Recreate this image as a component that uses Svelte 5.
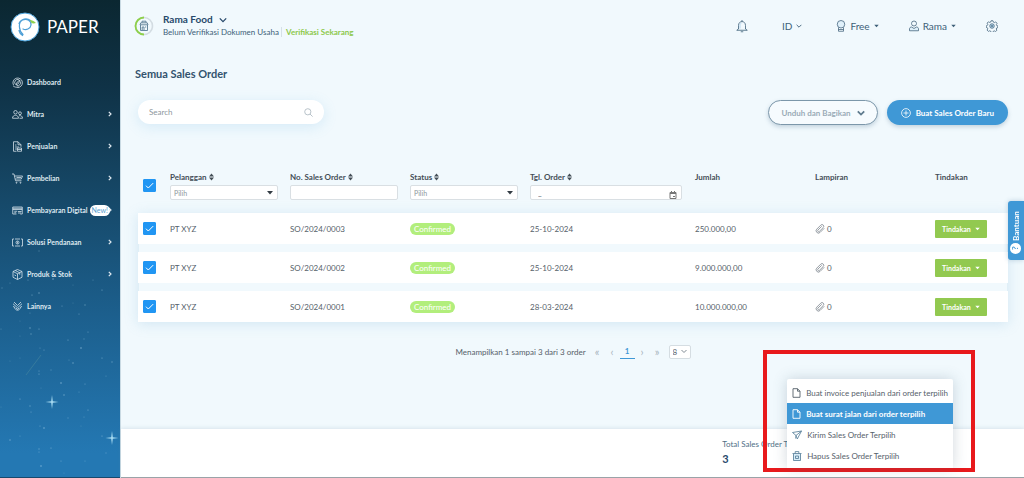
<script>
    const menu = [
        { label: "Dashboard", icon: "dashboard" },
        { label: "Mitra", icon: "partners", sub: true },
        { label: "Penjualan", icon: "invoice", sub: true },
        { label: "Pembelian", icon: "cart", sub: true },
        { label: "Pembayaran Digital", icon: "card", sub: true, badge: "New!" },
        { label: "Solusi Pendanaan", icon: "money", sub: true },
        { label: "Produk & Stok", icon: "box", sub: true },
        { label: "Lainnya", icon: "more" },
    ];

    const stars = [
        [39, 14], [10, 46], [28, 43], [53, 42], [73, 48], [93, 43], [39, 56], [32, 58], [73, 66], [85, 68],
        [62, 69], [102, 53], [2, 51], [30, 76], [79, 77], [41, 72], [20, 84], [1, 92], [30, 91], [39, 92],
        [20, 99], [31, 97], [88, 95], [68, 103], [84, 102], [40, 111], [44, 113], [81, 111], [20, 121], [69, 123],
        [73, 126], [102, 121], [10, 124], [112, 125], [39, 134], [39, 137], [51, 133], [106, 139], [85, 147], [61, 146],
        [41, 151], [79, 155], [64, 158], [20, 162], [1, 170], [30, 169], [31, 175], [88, 173], [68, 181], [84, 180],
        [40, 189], [44, 191], [81, 189], [20, 199], [10, 203], [102, 199], [112, 203], [39, 212], [39, 215], [51, 211],
        [106, 216], [85, 224], [61, 224], [41, 229], [64, 236],
    ];

    let orders = $state([
        { id: "SO/2024/0003", customer: "PT XYZ", status: "Confirmed", date: "25-10-2024", total: "250.000,00", files: 0, checked: true },
        { id: "SO/2024/0002", customer: "PT XYZ", status: "Confirmed", date: "25-10-2024", total: "9.000.000,00", files: 0, checked: true },
        { id: "SO/2024/0001", customer: "PT XYZ", status: "Confirmed", date: "28-03-2024", total: "10.000.000,00", files: 0, checked: true },
    ]);

    const actions = [
        { label: "Buat invoice penjualan dari order terpilih", icon: "file" },
        { label: "Buat surat jalan dari order terpilih", icon: "file", active: true },
        { label: "Kirim Sales Order Terpilih", icon: "send" },
        { label: "Hapus Sales Order Terpilih", icon: "trash" },
    ];

    let selected = $derived(orders.filter((o) => o.checked).length);

    const toggleAll = (e) => {
        orders.forEach((o) => (o.checked = e.currentTarget.checked));
    };
</script>

{#snippet sortIcon()}
    <svg class="sort" width="5" height="8" viewBox="0 0 5 8" aria-hidden="true">
        <path d="M2.5 0.4L5 3.4H0z M2.5 7.6L5 4.6H0z" fill="currentColor" />
    </svg>
{/snippet}

{#snippet caret()}
    <svg width="5" height="4" viewBox="0 0 5 4" aria-hidden="true"><path d="M0.3 0.8h4.4L2.5 3.2z" fill="currentColor" /></svg>
{/snippet}

{#snippet chevron(size, width)}
    <svg width={size} height={size} viewBox="0 0 8 8" fill="none" stroke="currentColor" stroke-width={width} aria-hidden="true">
        <path d="M0.8 2.4L4 5.6l3.2-3.2" />
    </svg>
{/snippet}

{#snippet clip()}
    <svg width="10" height="10" viewBox="0 0 20 20" fill="none" stroke="#7d878f" stroke-width="1.6" stroke-linecap="round" aria-hidden="true">
        <path d="M18 9l-7.8 7.8a4.6 4.6 0 0 1-6.6-6.6l8-8a3.4 3.4 0 0 1 4.9 4.8l-7.8 7.8a1.9 1.9 0 0 1-2.8-2.7l7-7" />
    </svg>
{/snippet}

<div class="app">
    <aside class="sidebar">
        <svg class="sky" viewBox="0 0 120 240" aria-hidden="true">
            {#each stars as [x, y], i}
                <circle cx={x} cy={y} r={i % 3 ? 0.6 : 0.8} fill="#a9d3ea" opacity={0.25 + (i % 4) * 0.12} />
            {/each}
            <path d="M26 138L41 118" stroke="#7fb5a8" stroke-width="0.6" opacity="0.4" />
            <path d="M52 158l0.8 6.2 5.7 0.8-5.7 0.8L52 172l-0.8-6.2-5.7-0.8 5.7-0.8z" fill="#a9dcf2" />
            <path d="M112 194l0.8 6.2 5.7 0.8-5.7 0.8-0.8 6.2-0.8-6.2-5.7-0.8 5.7-0.8z" fill="#a9dcf2" />
        </svg>

        <a class="brand" href="#home">
            <svg width="30" height="30" viewBox="0 0 30 30" fill="none" aria-hidden="true">
                <circle cx="15" cy="15" r="14" fill="#fff" stroke="#4aa3dc" />
                <path d="M13 22.5C8.500 18 8 10.500 12.500 8c4.500-2 9 1 8.500 5s-5 5.500-8 4M12.500 23.500c-2-1-3-3-3.500-5M9 11.500C11 6.500 17 5.500 20.500 8.500" stroke="#4d9fd6" stroke-width="1.200" stroke-linecap="round" />
                <path d="M20 8c2 0.500 3.500 0.500 6 3-2 0.800-4 0.500-5-0.500z" fill="#8fd14f" />
            </svg>
            <span>PAPER</span>
        </a>

        <nav>
            {#each menu as item}
                <a class="nav-item" href="#menu">
                    <svg width="11" height="11" viewBox="0 0 22 22" fill="none" stroke="currentColor" stroke-width="1.500" aria-hidden="true">
                        {#if item.icon === "dashboard"}
                            <path d="M3 16a9.500 9.500 0 1 1 8 5M2 17.500c3 3 7 3.500 11 2.500" />
                            <path d="M7 15a6 6 0 0 1 7-9.500M17 9a6 6 0 0 1-7.500 8M16 6l-3 7-5 3 2.500-6z" />
                        {:else if item.icon === "partners"}
                            <circle cx="7" cy="6.500" r="3.500" />
                            <circle cx="16" cy="8.500" r="2.800" />
                            <path d="M1 18.500c0-8 12-8 12 0zM14 13.500c4-1 7 1 7 5h-6" />
                        {:else if item.icon === "invoice"}
                            <path d="M9 20.500H3V1.500h9l6 6v4M12 1.500v6h6M6 8h3M6 12h8M6 16h4M11 14h8v6.500h-8zM11 17h8" />
                        {:else if item.icon === "cart"}
                            <path d="M0 2h4l3 13.500h12M5 6h16l-2.500 6H6.500M9 9h9" />
                            <circle cx="9" cy="19.500" r="1" />
                            <circle cx="17" cy="19.500" r="1" />
                        {:else if item.icon === "card"}
                            <path d="M9 18H1.500V4h19v14h-4M1.500 6.500h19M1.500 9h19M4.500 12.500h6M4.500 15.500h4M12 13h7M12 16h6" />
                        {:else if item.icon === "money"}
                            <path d="M4 4H1v14h3M18 4h3v14h-3M6 4h10M6 18h10" />
                            <circle cx="11" cy="11" r="3" />
                            <path d="M11 9v4" />
                        {:else if item.icon === "box"}
                            <path d="M11 1l9 4v11.500L11 21l-9-4.500V5zM2 5l9 4.500L20 5M11 9.500V21M6.500 3l9 4.500v4M5 12l3 1.500" />
                        {:else}
                            <path d="M4 2l7 7 7-7M2 5.500l9 8 9-8M2 11l3 1c1 8.500 11 8.500 12 0l3-1M8 14l3 3 3-3" />
                        {/if}
                    </svg>
                    <span>{item.label}</span>
                    {#if item.badge}<span class="new">{item.badge}</span>{/if}
                    {#if item.sub}
                        <svg class="arrow" width="4" height="6" viewBox="0 0 4 6" fill="none" stroke="currentColor" stroke-width="1.200" aria-hidden="true">
                            <path d="M0.800 0.800L3 3 0.800 5.200" />
                        </svg>
                    {/if}
                </a>
            {/each}
        </nav>
    </aside>

    <main>
        <header>
            <svg class="avatar" width="20" height="20" viewBox="0 0 20 20" fill="none" aria-hidden="true">
                <circle cx="10" cy="10" r="8.500" stroke="#d3dce2" stroke-width="1.600" />
                <path d="M10 18.500A8.500 8.500 0 0 1 10 1.500" stroke="#8ed04b" stroke-width="1.800" />
                <path d="M6.500 9v5.500h7V9M6 8.800l0.800-2h6.400l0.800 2zM8 6.500V5.200h4v1.300M8.200 14v-3h1.800v3M11 11h1.200" stroke="#587b93" stroke-width="0.900" />
            </svg>
            <div class="company">
                <button class="company-name">Rama Food {@render chevron(8, 1.3)}</button>
                <p>Belum Verifikasi Dokumen Usaha <a href="#verify">Verifikasi Sekarang</a></p>
            </div>
            <div class="tools">
                <button aria-label="Notifikasi">
                    <svg width="12" height="14" viewBox="0 0 24 28" fill="none" stroke="currentColor" stroke-width="1.600" aria-hidden="true">
                        <path d="M12 2v3M5 20v-7c0-10.500 14-10.500 14 0v7l3.500 2.500h-21L5 20M9.500 25.500h5" />
                        <path d="M8 19v-7c0-2 1-3.500 3-4" stroke="#a9d1ec" />
                    </svg>
                </button>
                <button class="lang">ID {@render chevron(6, 1.2)}</button>
                <button>
                    <svg width="10" height="12" viewBox="0 0 20 24" fill="none" stroke="currentColor" stroke-width="1.500" aria-hidden="true">
                        <circle cx="10" cy="8.500" r="7.500" fill="#dff0fa" />
                        <path d="M5 15v7.500h10V15M5 19h10" />
                    </svg>
                    <span>Free</span> {@render caret()}
                </button>
                <button>
                    <svg width="10" height="12" viewBox="0 0 20 24" fill="none" stroke="currentColor" stroke-width="1.500" aria-hidden="true">
                        <circle cx="10" cy="7" r="5" />
                        <path d="M1 21.500v-4c0-2 2-3.500 4-3.500l5 3 5-3c2 0 4 1.500 4 3.500v4z" fill="#dff0fa" />
                    </svg>
                    <span>Rama</span> {@render caret()}
                </button>
                <button aria-label="Pengaturan">
                    <svg width="12" height="12" viewBox="0 0 24 24" fill="none" stroke="currentColor" stroke-width="1.500" aria-hidden="true">
                        <path d="M10 1.500h4l0.800 2.800 2 0.900 2.600-1.400 2.700 2.800-1.400 2.600 0.800 2 2.300 0.700v3.200l-2.500 0.900-0.800 2 1.300 2.500-2.600 2.500-2.600-1.300-2 0.900-0.800 2.300h-3.600l-0.900-2.600-2-0.800-2.500 1.300-2.700-2.600 1.400-2.600-0.800-2-2.200-0.800v-3.200l2.300-0.900 0.800-2-1.400-2.400 2.600-2.700 2.600 1.300 2-0.800z" />
                        <circle cx="12" cy="12" r="4.500" fill="#bfe0f4" />
                        <circle cx="12" cy="12" r="1.500" />
                    </svg>
                </button>
            </div>
        </header>

        <h1>Semua Sales Order</h1>

        <section class="content">
            <div class="toolbar">
                <label class="search">
                    <input type="text" placeholder="Search" aria-label="Search" />
                    <svg width="9" height="9" viewBox="0 0 9 9" fill="none" stroke="#b9c3ca" aria-hidden="true">
                        <circle cx="3.800" cy="3.800" r="3.100" />
                        <path d="M6 6l2.600 2.600" />
                    </svg>
                </label>
                <button class="pill outline">Unduh dan Bagikan {@render chevron(8, 1.8)}</button>
                <button class="pill solid">
                    <svg width="10" height="10" viewBox="0 0 10 10" fill="none" stroke="currentColor" stroke-width="0.800" aria-hidden="true">
                        <circle cx="5" cy="5" r="4.400" />
                        <path d="M5 2.500v5M2.500 5h5" />
                    </svg>
                    Buat Sales Order Baru
                </button>
            </div>

            <table>
                <colgroup>
                    <col class="col-check" />
                    <col class="col" />
                    <col class="col" />
                    <col class="col" />
                    <col class="col-date" />
                    <col class="col" />
                    <col class="col" />
                    <col class="col-action" />
                </colgroup>
                <thead>
                    <tr>
                        <th class="check"><input type="checkbox" aria-label="Pilih semua" checked={selected === orders.length} onchange={toggleAll} /></th>
                        <th>
                            <label for="f-customer">Pelanggan {@render sortIcon()}</label>
                            <select id="f-customer"><option>Pilih</option></select>
                        </th>
                        <th>
                            <label for="f-number">No. Sales Order {@render sortIcon()}</label>
                            <input id="f-number" class="field" type="text" />
                        </th>
                        <th>
                            <label for="f-status">Status {@render sortIcon()}</label>
                            <select id="f-status"><option>Pilih</option></select>
                        </th>
                        <th>
                            <label for="f-date">Tgl. Order {@render sortIcon()}</label>
                            <input id="f-date" class="field date" type="text" value="_" />
                        </th>
                        <th>Jumlah</th>
                        <th>Lampiran</th>
                        <th>Tindakan</th>
                    </tr>
                </thead>
                <tbody>
                    {#each orders as order}
                        <tr>
                            <td class="check"><input type="checkbox" aria-label={order.id} bind:checked={order.checked} /></td>
                            <td>{order.customer}</td>
                            <td>{order.id}</td>
                            <td><span class="status">{order.status}</span></td>
                            <td>{order.date}</td>
                            <td>{order.total}</td>
                            <td><span class="files">{@render clip()} {order.files}</span></td>
                            <td><button class="action">Tindakan {@render caret()}</button></td>
                        </tr>
                    {/each}
                </tbody>
            </table>

            <div class="pagination">
                <span>Menampilkan 1 sampai 3 dari 3 order</span>
                <div class="pages">
                    <button>«</button>
                    <button>‹</button>
                    <button class="current">1</button>
                    <button>›</button>
                    <button>»</button>
                </div>
                <select class="page-size" aria-label="Jumlah per halaman"><option>8</option></select>
            </div>
        </section>

        <footer>
            <div class="total">
                <span>Total Sales Order Terpilih</span>
                <strong>{selected}</strong>
            </div>
        </footer>

        <div class="highlight">
            <div class="menu" role="menu">
                {#each actions as action}
                    <button class="menu-item" class:active={action.active} role="menuitem">
                        {#if action.icon === "file"}
                            <svg width="9" height="10" viewBox="0 0 9 10" fill="none" stroke="currentColor" stroke-width="0.900" aria-hidden="true">
                                <path d="M5.500 0.700H1v8.600h7V3.200zM5.500 0.700v2.500H8" />
                            </svg>
                        {:else if action.icon === "send"}
                            <svg width="10" height="10" viewBox="0 0 10 10" fill="none" stroke="#4f7894" stroke-width="0.800" aria-hidden="true">
                                <path d="M0.500 2.500L9.500 1 5.300 9 4 5.500zM4 5.500L9.500 1M4 5.500L3.600 8.500" />
                            </svg>
                        {:else}
                            <svg width="10" height="10" viewBox="0 0 10 10" fill="none" stroke="#4f7894" stroke-width="0.800" aria-hidden="true">
                                <path d="M1.500 3v6.500h7V3" fill="#d9edf8" />
                                <path d="M0.500 2.500h9M3.200 2.300V0.600h3.600v1.700M3.500 5h3v2.500h-3z" />
                            </svg>
                        {/if}
                        {action.label}
                    </button>
                {/each}
            </div>
        </div>
    </main>

    <button class="help">
        <span class="help-mark">?</span>
        Bantuan
    </button>
</div>

<style>
    :global(body) {
        margin: 0;
        background: #f1f9fd;
    }

    .app {
        display: flex;
        min-height: 100vh;
        font-family: Lato, "Liberation Sans", sans-serif;
        font-size: 8px;
        line-height: 12px;
        color: #56616a;
    }
    button,
    input,
    select {
        font: inherit;
        color: inherit;
        margin: 0;
        box-sizing: border-box;
    }
    button {
        display: inline-flex;
        align-items: center;
        border: none;
        padding: 0;
        background: none;
        white-space: nowrap;
        cursor: pointer;
    }
    a {
        text-decoration: none;
    }
    svg {
        flex-shrink: 0;
    }

    /* Sidebar */
    .sidebar {
        position: relative;
        box-sizing: border-box;
        width: 120px;
        flex-shrink: 0;
        background: linear-gradient(#0b2731, #0f3246 18%, #154563 38%, #1c5f8d 66%, #2478b3 95%);
        border-bottom: 1px solid #17496e;
    }
    .sky {
        position: absolute;
        left: 0;
        bottom: 0;
        width: 100%;
    }
    .brand {
        position: relative;
        display: flex;
        align-items: center;
        gap: 7px;
        height: 54px;
        padding-left: 10px;
        color: #fff;
        font-size: 17px;
    }
    nav {
        position: relative;
        padding-top: 12px;
    }
    .nav-item {
        display: flex;
        align-items: center;
        height: 32px;
        gap: 4px;
        padding: 0 8px 0 12px;
        color: #dfe9f0;
        font-size: 7px;
        font-weight: 700;
        white-space: nowrap;
    }
    .new {
        position: relative;
        z-index: 1;
        padding: 0 2px;
        margin: 0 -6px 0 -2px;
        border-radius: 6px;
        background: #fff;
        color: #5b9fd0;
        font-weight: 400;
        line-height: 11px;
    }
    .arrow {
        margin-left: auto;
    }

    /* Page */
    main {
        position: relative;
        display: flex;
        flex-direction: column;
        flex: 1;
        min-width: 0;
        border-left: 1px solid #c9dae3;
        background: #f1f9fd;
    }
    header {
        display: flex;
        align-items: center;
        gap: 9px;
        height: 52px;
        padding: 0 26px 0 13px;
        color: #3d5f78;
    }
    .company-name {
        gap: 6px;
        font-size: 10px;
        font-weight: 700;
        line-height: 13px;
        color: #27496b;
    }
    .company p {
        margin: 0;
        line-height: 13px;
        white-space: nowrap;
    }
    .company a {
        padding-left: 4px;
        border-left: 1px solid #d5e0e7;
        color: #8cc84b;
        font-weight: 700;
    }
    .tools {
        display: flex;
        gap: 30px;
        margin-left: auto;
        font-size: 10px;
    }
    .tools button {
        gap: 4px;
    }
    .tools .lang {
        margin: 0 4px;
    }
    h1 {
        margin: 14px 0 0 14px;
        font-size: 11px;
        line-height: 16px;
        color: #33536e;
    }
    .content {
        flex: 1;
        padding: 18px 16px 60px 17px;
    }

    .toolbar {
        display: flex;
        align-items: flex-start;
        gap: 9px;
    }
    .search {
        display: flex;
        align-items: center;
        box-sizing: border-box;
        width: 186px;
        height: 24px;
        margin-right: auto;
        padding: 0 11px;
        border-radius: 12px;
        background: #fff;
        box-shadow: 0 3px 14px rgba(90, 170, 220, 0.18);
    }
    .search input {
        flex: 1;
        min-width: 0;
        padding: 0;
        border: none;
        outline: none;
        background: none;
    }
    .search input::placeholder {
        color: #8d969d;
    }
    .pill {
        height: 25px;
        padding: 0 14px;
        border-radius: 13px;
        font-weight: 700;
        box-shadow: 0 2px 4px rgba(60, 100, 130, 0.25);
    }
    .pill.outline {
        gap: 6px;
        padding: 0 12px;
        border: 1px solid #7c97aa;
        color: #9aabb7;
        background: #f6fbfe;
    }
    .pill.outline :global(svg) {
        color: #5f7b8e;
    }
    .pill.solid {
        gap: 5px;
        background: #3f98d6;
        color: #fff;
    }

    table {
        width: 100%;
        margin-top: 38px;
        table-layout: fixed;
        border-collapse: separate;
        border-spacing: 0 8px;
    }
    .col-check {
        width: 32px;
    }
    .col {
        width: 120px;
    }
    .col-date {
        width: 165px;
    }
    .col-action {
        width: 73px;
    }
    th {
        height: 29px;
        padding: 0 0 5px;
        text-align: left;
        vertical-align: top;
        color: #444e57;
    }
    th label {
        display: flex;
        align-items: center;
        gap: 2px;
        margin-bottom: 2px;
    }
    th select,
    .field {
        display: block;
        width: 108px;
        height: 15px;
        padding: 0 4px;
        border: 1px solid #d9dfe3;
        border-radius: 2px;
        background: #fff;
        font-size: 7px;
        font-weight: 400;
    }
    th select {
        appearance: none;
        padding: 0 3px;
        color: #8d969d;
        background: #fff url("data:image/svg+xml,%3Csvg xmlns='http://www.w3.org/2000/svg' width='6' height='4'%3E%3Cpath d='M0 0h6L3 3.500z' fill='%23333c44'/%3E%3C/svg%3E") no-repeat right 4px center;
    }
    .field.date {
        width: 152px;
        padding: 0 7px;
        font-size: 8px;
        background: #fff url("data:image/svg+xml,%3Csvg xmlns='http://www.w3.org/2000/svg' width='8' height='8' fill='none' stroke='%23777'%3E%3Cpath d='M1 1.500h6v6H1zM1 2.500h6M2.500 0v1M5.500 0v1M4 5.500h2' /%3E%3C/svg%3E") no-repeat right 4px bottom 0;
    }
    tbody {
        background: #e8f3fa;
        box-shadow: 0 2px 12px rgba(120, 180, 215, 0.25);
    }
    tbody tr {
        background: #fff;
    }
    td {
        height: 31px;
        padding: 0;
        vertical-align: middle;
    }
    .check {
        padding-left: 5px;
        vertical-align: middle;
    }
    .check input {
        display: block;
        appearance: none;
        width: 13px;
        height: 13px;
        border: 1px solid #2196f3;
        border-radius: 1px;
    }
    .check input:checked {
        background: #2196f3 url("data:image/svg+xml,%3Csvg xmlns='http://www.w3.org/2000/svg' width='11' height='11' fill='none' stroke='white'%3E%3Cpath d='M2 5.700l2.300 2.300 4.900-4.900'/%3E%3C/svg%3E") center no-repeat;
    }
    .status {
        display: inline-block;
        padding: 0 4px;
        border-radius: 6px;
        background: #b2ee7c;
        color: #fff;
    }
    .files {
        display: flex;
        align-items: center;
        gap: 2px;
    }
    .action {
        gap: 4px;
        height: 18px;
        padding: 0 7px;
        border-radius: 1px;
        background: #92c950;
        color: #fff;
        font-size: 7px;
        font-weight: 700;
    }

    .pagination {
        display: flex;
        align-items: center;
        justify-content: center;
        gap: 4px;
        margin-top: 14px;
    }
    .pages {
        display: flex;
    }
    .pages button {
        justify-content: center;
        width: 15px;
        height: 15px;
        color: #a9b5bd;
        font-size: 11px;
    }
    .pages .current {
        border-bottom: 1px solid #3f98d6;
        color: #3f98d6;
        font-size: 8px;
        font-weight: 700;
    }
    .page-size {
        appearance: none;
        width: 22px;
        height: 14px;
        padding: 0 3px;
        border: 1px solid #d5dde2;
        border-radius: 2px;
        background: #fff url("data:image/svg+xml,%3Csvg xmlns='http://www.w3.org/2000/svg' width='6' height='5' fill='none' stroke='%23808b94'%3E%3Cpath d='M0.500 1L3 3.500 5.500 1'/%3E%3C/svg%3E") no-repeat right 3px center;
    }

    footer {
        display: flex;
        justify-content: flex-end;
        box-sizing: border-box;
        height: 49px;
        padding: 9px 215px 0 0;
        border-bottom: 1px solid #9aa3a8;
        background: #fff;
        box-shadow: 0 -1px 4px rgba(120, 150, 170, 0.2);
        color: #4f6f86;
    }
    .total {
        display: flex;
        flex-direction: column;
        gap: 2px;
    }
    .total strong {
        font-size: 11px;
        line-height: 14px;
        color: #27496b;
    }

    /* Bulk action menu, opened over the footer */
    .highlight {
        position: absolute;
        right: 49px;
        bottom: 6px;
        padding: 25px 18px 0 20px;
        border: 4px solid #e8191c;
    }
    .menu {
        display: flex;
        flex-direction: column;
        padding: 3px 0 2px;
        border-radius: 2px 2px 0 0;
        background: #fff;
        box-shadow: 0 0 14px rgba(70, 100, 120, 0.25);
    }
    .menu-item {
        gap: 5px;
        height: 21px;
        padding: 0 5px;
    }
    .menu-item.active {
        background: #3f98d6;
        color: #fff;
        font-weight: 700;
    }

    .help {
        position: fixed;
        top: 201px;
        right: 0;
        gap: 2px;
        width: 16px;
        height: 59px;
        padding: 6px 2px;
        border-radius: 0 3px 3px 0;
        background: #3f98d6;
        color: #fff;
        font-weight: 700;
        writing-mode: vertical-rl;
        transform: rotate(180deg);
        box-shadow: 0 0 5px rgba(60, 110, 150, 0.3);
    }
    .help-mark {
        width: 11px;
        height: 11px;
        border-radius: 50%;
        background: #fff;
        color: #3f98d6;
        line-height: 11px;
        text-align: center;
    }
</style>
